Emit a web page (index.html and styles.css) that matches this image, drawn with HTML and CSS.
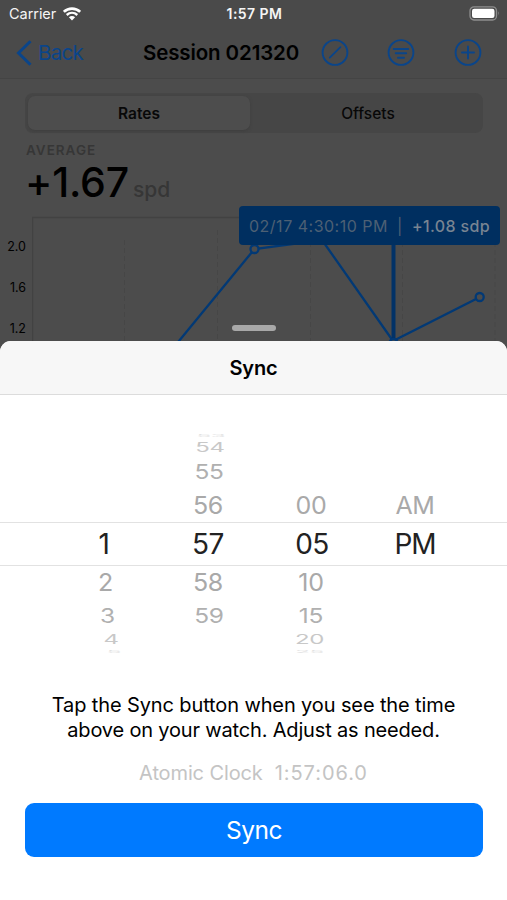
FILE: index.html
```html
<!DOCTYPE html>
<html lang="en">
<head>
<meta charset="utf-8">
<title>Session 021320</title>
<link rel="stylesheet" href="styles.css">
</head>
<body>
<div class="phone">
  <div class="status">
    <div class="carrier"><span class="carrier-name">Carrier</span>
      <svg class="wifi" width="18" height="14" viewBox="0 0 18 14" fill="none" stroke="#fff"><path d="M.8 4.900C5.300.4 12.700.4 17.200 4.900" stroke-width="2.700"/><path d="M3.700 8C6.800 5.100 11.200 5.100 14.300 8" stroke-width="2.400"/><path d="M5.900 10.300C7.800 8.500 10.200 8.500 12.100 10.300L9 13.400Z" fill="#fff" stroke="none"/></svg>
    </div>
    <span class="clock">1:57 PM</span>
    <svg class="battery" width="31" height="15" viewBox="0 0 31 15"><rect x="1" y=".8" width="26.500" height="13.200" rx="4" fill="none" stroke="#8e8e8e" stroke-width="1.300"/><rect x="3" y="2.800" width="22.500" height="9.200" rx="2.200" fill="#fff"/><path d="M29 5.200Q30.600 7.300 29 9.400Z" fill="#8e8e8e"/></svg>
  </div>
  <div class="nav">
    <div class="back"><svg width="16" height="26" viewBox="0 0 16 26" fill="none" stroke="#0a458a" stroke-width="3"><path d="M14.500 1.200L2.500 13L14.500 24.800"/></svg><span class="back-label">Back</span></div>
    <span class="title">Session 021320</span>
    <div class="actions">
      <svg width="28" height="28" viewBox="0 0 28 28" fill="none" stroke="#0a458a" stroke-width="1.900" stroke-linecap="round"><circle cx="14" cy="13.500" r="12.400"/><path d="M8.800 18.700L19.400 8.200"/></svg>
      <svg width="28" height="28" viewBox="0 0 28 28" fill="none" stroke="#0a458a" stroke-width="1.900" stroke-linecap="round"><circle cx="14" cy="13.500" r="12.400"/><path d="M6.800 10h14.400M8.800 14.300h10.400M11 18.700h6"/></svg>
      <svg width="28" height="28" viewBox="0 0 28 28" fill="none" stroke="#0a458a" stroke-width="1.900" stroke-linecap="round"><circle cx="14" cy="13.500" r="12.400"/><path d="M8 13.500h12M14 7.500v12"/></svg>
    </div>
  </div>
  <div class="segments"><div class="segment active"><span class="t-rates">Rates</span></div><div class="segment offsets"><span class="t-offsets">Offsets</span></div></div>
  <div class="summary">
    <div class="caption"><span class="t-average">AVERAGE</span></div>
    <div class="figure"><span class="value">+1.67</span><span class="unit">spd</span></div>
  </div>
  <div class="chart">
    <div class="axis"><span>2.0</span><span>1.6</span><span>1.2</span></div>
    <svg class="plot" width="475" height="136" viewBox="32 214 475 136" fill="none">
      <path d="M32.500 350V217.500H495" stroke="#424242" stroke-width="1.500"/>
      <path d="M124.500 240V350M217.500 230V350M310.500 218V350M402.500 218V350M495 218V350" stroke="#464646" stroke-dasharray="5 3"/>
      <path d="M165 358L254.500 249L322 240L393 341L480 297" stroke="#023975" stroke-width="2.300"/>
      <path d="M393.500 240V345" stroke="#023267" stroke-width="4"/>
      <circle cx="254.500" cy="249" r="4" fill="#4c4c4c" stroke="#023975" stroke-width="2.300"/>
      <circle cx="393.500" cy="343" r="4" fill="#4c4c4c" stroke="#023975" stroke-width="2.300"/>
      <circle cx="479.700" cy="297" r="4" fill="#4c4c4c" stroke="#023975" stroke-width="2.300"/>
    </svg>
    <div class="tooltip"><span class="when">02/17 4:30:10 PM</span><span class="bar">|</span><span class="rate">+1.08 sdp</span></div>
    <div class="grabber"></div>
  </div>
  <div class="sheet">
    <div class="sheet-head"><span class="t-sheet">Sync</span></div>
    <div class="picker">
      <div class="wheel hours"><span class="w0"></span><span class="w1"></span><span class="w2"></span><span class="w3"></span><span class="w4">1</span><span class="w5">2</span><span class="w6">3</span><span class="w7">4</span><span class="w8">5</span></div>
      <div class="wheel minutes"><span class="w0">53</span><span class="w1">54</span><span class="w2">55</span><span class="w3">56</span><span class="w4">57</span><span class="w5">58</span><span class="w6">59</span></div>
      <div class="wheel seconds"><span class="w0"></span><span class="w1"></span><span class="w2"></span><span class="w3">00</span><span class="w4">05</span><span class="w5">10</span><span class="w6">15</span><span class="w7">20</span><span class="w8">25</span></div>
      <div class="wheel period"><span class="w0"></span><span class="w1"></span><span class="w2"></span><span class="w3">AM</span><span class="w4">PM</span></div>
    </div>
    <div class="help"><span class="t-help1">Tap the Sync button when you see the time</span><span class="t-help2">above on your watch. Adjust as needed.</span></div>
    <div class="atomic"><span class="atomic-label">Atomic Clock</span><span class="atomic-time">1:57:06.0</span></div>
    <div class="button"><span class="t-button">Sync</span></div>
  </div>
</div>
</body>
</html>
```
FILE: styles.css
```css
* { box-sizing: border-box; }
body { margin: 0; font-family: Inter, "Liberation Sans", sans-serif; color: #000; background: #4c4c4c; }
svg { display: block; flex: none; }
span { white-space: nowrap; }
.phone { width: 507px; height: 900px; overflow: hidden; display: flex; flex-direction: column; background: #4c4c4c; }

.status { height: 27px; flex: none; display: grid; grid-template-columns: 1fr auto 1fr; align-items: center; padding: 0 7px 0 9px; color: #f5f5f5; background: #4a4a4a; }
.carrier { display: flex; align-items: center; gap: 7px; }
.carrier-name { font-size: 14.500px; letter-spacing: -0.050px; }
.clock { font-size: 14px; font-weight: 600; letter-spacing: 0.450px; }
.battery { justify-self: end; }

.nav { height: 52px; flex: none; display: flex; align-items: center; padding: 0 25px 0 16px; border-bottom: 1px solid #444; background: #4a4a4a; }
.back { display: flex; align-items: center; gap: 6px; width: 127px; color: #0a458a; font-size: 20.500px; letter-spacing: -0.700px; }
.title { width: 177.500px; font-size: 20.500px; font-weight: 600; letter-spacing: -0.120px; }
.actions { display: flex; gap: 38.500px; }

.segments { display: flex; flex: none; height: 40px; margin: 14px 24px 0 25px; padding: 3px; border-radius: 8px; background: #464646; }
.segment { flex: 1; display: flex; align-items: center; justify-content: center; font-size: 15.500px; font-weight: 500; color: #080808; }
.segment.active { flex: 0 0 222px; background: #4d4d4d; border-radius: 7px; box-shadow: 0 1px 3px #3e3e3e; font-weight: 600; }
.offsets { padding-left: 6px; }

.summary { height: 81px; flex: none; padding: 9px 26px 0 25px; }
.caption { height: 16px; line-height: 16px; padding-left: 1px; font-size: 13.500px; font-weight: 600; letter-spacing: 1px; color: #363636; }
.figure { height: 34px; margin-top: 7px; line-height: 34px; display: flex; align-items: baseline; gap: 4px; }
.value { font-size: 41px; font-weight: 500; letter-spacing: -0.200px; }
.unit { font-size: 21px; line-height: 24px; font-weight: 500; color: #363636; }

.chart { position: relative; display: flex; flex: none; height: 127px; }
.axis { width: 32px; height: 127px; padding: 23px 6px 0 0; display: flex; flex-direction: column; align-items: flex-end; }
.axis span { height: 20px; line-height: 20px; margin-bottom: 21px; font-size: 12.500px; }
.plot { height: 136px; }
.tooltip { position: absolute; left: 239px; top: -8px; width: 261px; height: 39px; border-radius: 4px; background: #002f60; display: flex; align-items: center; padding-left: 10px; font-size: 16px; color: #4d6074; }
.when { width: 148px; letter-spacing: 0.500px; }
.bar { width: 15px; line-height: 20px; }
.rate { font-weight: 500; letter-spacing: 0.350px; color: #788492; }
.grabber { position: absolute; left: 232px; top: 111px; width: 44px; height: 6px; border-radius: 3px; background: #a8a8a8; }

.sheet { position: relative; height: 559px; flex: none; border-radius: 11px 11px 0 0; background: #fff; display: flex; flex-direction: column; overflow: hidden; }
.sheet-head { height: 54px; flex: none; display: flex; align-items: center; justify-content: center; background: #f7f7f7; border-bottom: 1px solid #dcdcdc; font-size: 20px; font-weight: 600; letter-spacing: -0.200px; }
.picker { height: 258px; flex: none; overflow: hidden; padding: 36px 0 0 52px; display: grid; grid-template-columns: 104px 104px 104px 104px; background: linear-gradient(#e2e2e2, #e2e2e2) 0 127px / 100% 1px no-repeat, linear-gradient(#e2e2e2, #e2e2e2) 0 170px / 100% 1px no-repeat; }
.wheel { display: grid; grid-template-rows: 10px 12px 36px 32px 46px 31px 36px 11px 13px; }
.wheel span { display: flex; align-items: center; justify-content: center; line-height: 1; font-size: 27px; letter-spacing: -0.300px; color: #a9a9a9; }
.wheel .w0, .wheel .w8 { font-size: 24px; transform: scaleY(.15); color: #e2e2e2; }
.wheel .w1, .wheel .w7 { font-size: 24px; transform: scaleY(.55); color: #c8c8c8; }
.wheel .w2, .wheel .w6 { font-size: 24.500px; transform: scaleY(.82); color: #b0b0b0; }
.wheel .w3, .wheel .w5 { font-size: 25px; transform: scaleY(.96); }
.wheel .w4 { font-size: 28px; letter-spacing: -0.500px; color: #222; }
.minutes .w0 { padding-left: 6px; }
.minutes .w1 { padding-left: 4px; }
.minutes .w2, .minutes .w6 { padding-left: 2px; }
.minutes .w1, .minutes .w2 { padding-top: 2px; }
.hours .w5 { padding-left: 3px; }
.hours .w6 { padding-left: 7px; }
.hours .w7 { padding-left: 14px; }
.hours .w8 { padding-left: 20px; }
.seconds .w3, .seconds .w5, .seconds .w6 { padding-right: 2px; }
.seconds .w7, .seconds .w8 { padding-right: 5px; }
.period .w3 { padding-right: 2px; }
.period .w4 { padding-right: 2px; letter-spacing: -1px; }

.help { height: 49px; flex: none; margin-top: 40px; display: flex; flex-direction: column; align-items: center; font-size: 20px; line-height: 24.500px; letter-spacing: -0.120px; }
.t-help2 { letter-spacing: -0.170px; }
.atomic { height: 24px; line-height: 24px; margin-top: 19px; display: flex; justify-content: center; gap: 12px; font-size: 20px; color: #c4c4c4; }
.atomic-label { letter-spacing: -0.120px; }
.atomic-time { letter-spacing: 0.950px; }
.button { margin: 18px 24px 0 25px; height: 54px; flex: none; border-radius: 9px; background: #007aff; color: #fff; display: flex; align-items: center; justify-content: center; font-size: 24.500px; letter-spacing: -0.500px; }
```
